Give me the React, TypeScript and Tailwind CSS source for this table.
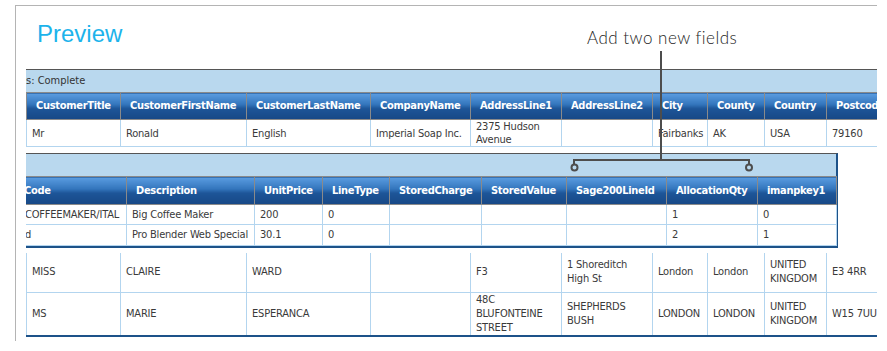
import React from "react";

const hdr =
  "border border-[#8a8a8a] bg-[linear-gradient(180deg,#5a9ce0_0%,#3476bd_42%,#1d5598_58%,#174886_100%)] text-white font-bold text-left whitespace-nowrap px-[9px] tracking-[-0.3px] overflow-hidden";
const cell = "border border-[#b3d5ef] text-left align-middle px-[5px] tracking-[-0.2px] overflow-hidden";

const topCols = [94, 126, 124, 100, 91, 91, 55, 57, 62, 100];
const topHead = ["CustomerTitle", "CustomerFirstName", "CustomerLastName", "CompanyName", "AddressLine1", "AddressLine2", "City", "County", "Country", "Postcode"];
const topRow = ["Mr", "Ronald", "English", "Imperial Soap Inc.", "2375 Hudson Avenue", "", "Fairbanks", "AK", "USA", "79160"];

const subCols = [103, 128, 68, 67, 92, 85, 100, 91, 79];
const subHead = ["Code", "Description", "UnitPrice", "LineType", "StoredCharge", "StoredValue", "Sage200LineId", "AllocationQty", "imanpkey1"];
const subRows = [
  ["COFFEEMAKER/ITAL", "Big Coffee Maker", "200", "0", "", "", "", "1", "0"],
  ["d", "Pro Blender Web Special", "30.1", "0", "", "", "", "2", "1"],
];

const moreRows = [
  { h: "h-[39px]", c: ["MISS", "CLAIRE", "WARD", "", "F3", "1 Shoreditch High St", "London", "London", "UNITED KINGDOM", "E3 4RR"] },
  { h: "h-[41px]", c: ["MS", "MARIE", "ESPERANCA", "", "48C BLUFONTEINE STREET", "SHEPHERDS BUSH", "LONDON", "LONDON", "UNITED KINGDOM", "W15 7UU"] },
];

function Cols({ widths }: { widths: number[] }) {
  return (
    <colgroup>
      {widths.map((w, i) => (
        <col key={i} style={{ width: w }} />
      ))}
    </colgroup>
  );
}

export default function App() {
  return (
    <div className="relative w-[887px] h-[351px] overflow-hidden bg-white font-['DejaVu_Sans_Condensed','DejaVu_Sans',sans-serif] text-[11px] leading-[14px] text-[#3a3a3a] [font-stretch:condensed]">
      {/* page frame */}
      <div className="ml-[15px] mt-[5px] w-[862px] h-[336px] border-l border-t border-[#b4b4b4] overflow-hidden">
        <h1 className="pl-[21px] pt-[16px] h-[40px] font-['Liberation_Sans',Arial,sans-serif] text-[24px] leading-[24px] text-[#1cb3eb] [font-stretch:normal]">
          Preview
        </h1>

        <div className="ml-[10px] mt-[23px] w-[851px] overflow-hidden">
          {/* customer table */}
          <div className="w-[900px]">
            <div className="h-[23px] border-t border-[#555] bg-[#b9d8ee] flex items-center text-[#333]">
              s: Complete
            </div>
            <table className="table-fixed border-collapse w-[900px]">
              <Cols widths={topCols} />
              <thead>
                <tr className="h-[27px]">
                  {topHead.map((h) => (
                    <th key={h} className={hdr}>{h}</th>
                  ))}
                </tr>
              </thead>
              <tbody>
                <tr className="h-[27px]">
                  {topRow.map((c, i) => (
                    <td key={i} className={cell + " leading-[13px]"}>{c}</td>
                  ))}
                </tr>
              </tbody>
            </table>
          </div>

          {/* order lines (nested) */}
          <div className="mt-[6px] ml-[-3px] w-[815px] border-t border-t-[#555] border-r-2 border-b-2 border-r-[#1d5289] border-b-[#1d5289]">
            <div className="h-[22px] bg-[#b9d8ee]" />
            <table className="table-fixed border-collapse w-[813px]">
              <Cols widths={subCols} />
              <thead>
                <tr className="h-[28px]">
                  {subHead.map((h, i) => (
                    <th key={h} className={hdr + (i === 0 ? " !pl-[0px]" : "")}>{h}</th>
                  ))}
                </tr>
              </thead>
              <tbody>
                {subRows.map((r, ri) => (
                  <tr key={ri} className={ri === 0 ? "h-[20px]" : "h-[21px]"}>
                    {r.map((c, i) => (
                      <td key={i} className={cell + " whitespace-nowrap" + (i === 0 ? " !pl-[1px]" : "")}>{c}</td>
                    ))}
                  </tr>
                ))}
              </tbody>
            </table>
          </div>

          {/* more customer rows */}
          <div className="mt-[5px] w-[900px] border-b-2 border-[#1d5289]">
            <table className="table-fixed border-collapse w-[900px]">
              <Cols widths={topCols} />
              <tbody>
                {moreRows.map((r, ri) => (
                  <tr key={ri} className={r.h}>
                    {r.c.map((c, i) => (
                      <td key={i} className={cell + (ri === 0 ? " border-t-0" : "") + (ri === 1 ? " border-b-0" : "")}>{c}</td>
                    ))}
                  </tr>
                ))}
              </tbody>
            </table>
          </div>
        </div>
      </div>

      {/* annotation */}
      <div className="absolute left-[587px] top-[29px] font-['Lato',sans-serif] font-light text-[17px] leading-[17px] tracking-[0.5px] text-[#1e1e1e] whitespace-nowrap [font-stretch:normal]">
        Add two new fields
      </div>
      <svg className="absolute left-0 top-0 pointer-events-none" width="887" height="351" viewBox="0 0 887 351">
        <g stroke="#4d4d4d" strokeWidth="2" fill="none">
          <path d="M661 51 V160 M574 160 H749 M574 159 V164 M749 159 V164" />
          <circle cx="574.5" cy="167.5" r="3" />
          <circle cx="749" cy="167.5" r="3" />
        </g>
      </svg>
    </div>
  );
}
